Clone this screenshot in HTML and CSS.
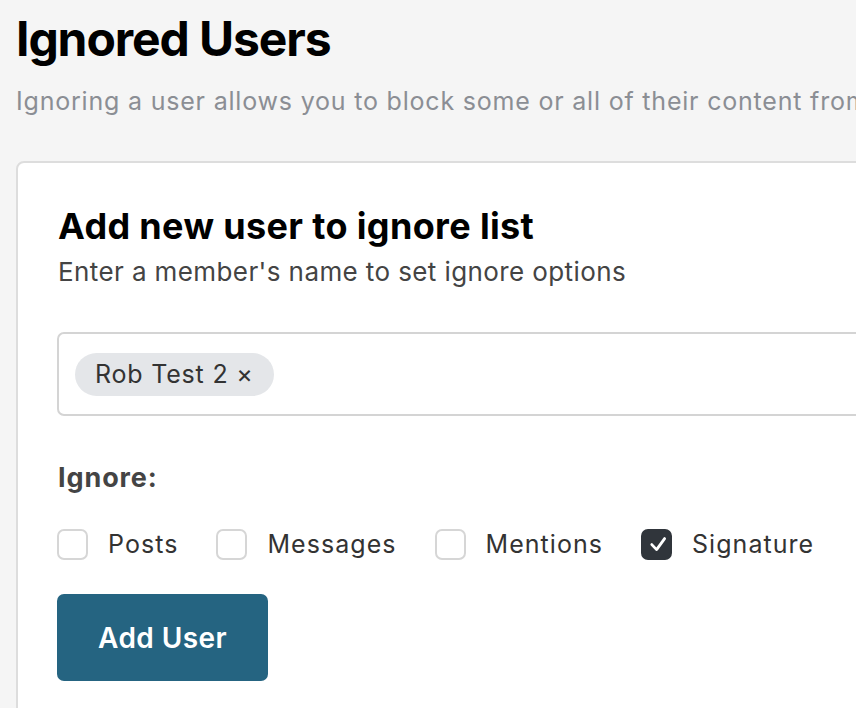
FILE: index.html
```html
<!DOCTYPE html>
<html>
<head>
<meta charset="utf-8">
<link rel="stylesheet" href="styles.css">
</head>
<body>
<div class="page">
  <h1 class="title">Ignored Users</h1>
  <p class="lead">Ignoring a user allows you to block some or all of their content from appearing throughout the community.</p>
  <div class="card">
    <h2 class="card-title">Add new user to ignore list</h2>
    <p class="card-sub">Enter a member's name to set ignore options</p>
    <div class="token-input">
      <span class="chip">Rob Test 2 ×</span>
    </div>
    <div class="ignore-label">Ignore:</div>
    <div class="options">
      <label class="opt"><span class="box"></span><span class="opt-text">Posts</span></label>
      <label class="opt"><span class="box"></span><span class="opt-text">Messages</span></label>
      <label class="opt"><span class="box"></span><span class="opt-text">Mentions</span></label>
      <label class="opt"><span class="box checked"><svg width="31" height="31" viewBox="0 0 31 31"><path d="M10.8 15.6l4.8 5 8-11" fill="none" stroke="#fff" stroke-width="2.8" stroke-linecap="round" stroke-linejoin="round"/></svg></span><span class="opt-text">Signature</span></label>
    </div>
    <button class="btn">Add User</button>
  </div>
</div>
</body>
</html>
```
FILE: styles.css
```css
html, body {
  margin: 0;
  padding: 0;
  background: #f5f5f5;
  overflow: hidden;
}
body {
  font-family: Inter, "Noto Sans", sans-serif;
  width: 856px;
  height: 708px;
}
.page {
  padding: 11px 0 0 16px;
  width: 1200px;
}
.title {
  margin: 0;
  font-size: 48px;
  font-weight: 700;
  line-height: 56px;
  color: #000;
  letter-spacing: -1.1px;
}
.lead {
  margin: 19px 0 0;
  font-size: 25px;
  line-height: 30px;
  color: #8b8e94;
  letter-spacing: 0.8px;
  white-space: nowrap;
}
.card {
  margin-top: 45px;
  background: #fff;
  border: 2px solid #dddddd;
  border-radius: 8px;
  padding: 41px 0 40px 40px;
  width: 1100px;
}
.card-title {
  margin: 0;
  font-size: 36px;
  font-weight: 700;
  line-height: 44px;
  color: #000;
  letter-spacing: 0.35px;
}
.card-sub {
  margin: 8px 0 0;
  font-size: 26px;
  line-height: 32px;
  color: #444;
  letter-spacing: 0.4px;
}
.token-input {
  margin-top: 44px;
  margin-left: -1px;
  border: 2px solid #d4d4d4;
  border-radius: 7px;
  box-sizing: border-box;
  height: 84px;
  display: flex;
  align-items: center;
  padding-left: 16px;
}
.chip {
  background: #e4e6e9;
  border-radius: 22px;
  height: 43px;
  line-height: 43px;
  padding: 0 20px;
  font-size: 25px;
  letter-spacing: 0.8px;
  color: #333;
}
.ignore-label {
  margin-top: 45px;
  font-size: 27px;
  font-weight: 700;
  color: #444;
  line-height: 34px;
  letter-spacing: 0.9px;
}
.options {
  display: flex;
  align-items: center;
  gap: 38px;
  margin-top: 34px;
  margin-left: -1px;
}
.opt {
  display: flex;
  align-items: center;
  gap: 20px;
}
.box {
  width: 31px;
  height: 31px;
  box-sizing: border-box;
  border: 2px solid #d6d6d6;
  border-radius: 7px;
  background: #fff;
  position: relative;
}
.box svg {
  position: absolute;
  left: -2px;
  top: -2px;
}
.box.checked {
  background: #30353b;
  border-color: #30353b;
}
.opt-text {
  font-size: 25px;
  color: #333;
  line-height: 31px;
  letter-spacing: 1.05px;
}
.btn {
  margin-top: 34px;
  margin-left: -1px;
  display: block;
  width: 211px;
  height: 87px;
  background: #256481;
  border: none;
  border-radius: 7px;
  color: #fff;
  font-family: Inter, "Noto Sans", sans-serif;
  font-size: 28px;
  font-weight: 600;
  letter-spacing: 0.4px;
  padding: 0;
}
```
